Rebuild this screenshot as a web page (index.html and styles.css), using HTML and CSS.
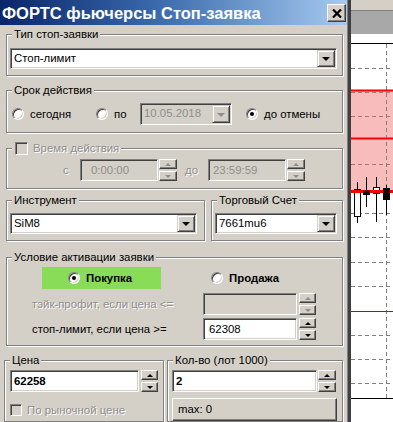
FILE: index.html
```html
<!DOCTYPE html>
<html>
<head>
<meta charset="utf-8">
<link rel="stylesheet" href="styles.css">
</head>
<body>
<div class="screen">
  <div class="dialog">
    <div class="titlebar">
      <span class="title">ФОРТС фьючерсы Стоп-заявка</span>
      <span class="close">
        <svg width="10" height="9" viewBox="0 0 10 9"><path d="M1 0.5 L9 8.5 M9 0.5 L1 8.5" stroke="#000" stroke-width="2.2" fill="none"/></svg>
      </span>
    </div>

    <fieldset class="group g-type">
      <legend>Тип стоп-заявки</legend>
      <div class="combo w-type"><span class="ctext">Стоп-лимит</span><span class="drop"><i class="tri"></i></span></div>
    </fieldset>

    <fieldset class="group g-term">
      <legend>Срок действия</legend>
      <div class="row term-row">
        <span class="radio r-today"><span class="rb"></span>сегодня</span>
        <span class="radio r-to"><span class="rb"></span>по</span>
        <div class="combo disabled w-date"><span class="ctext">10.05.2018</span><span class="drop"><i class="tri"></i></span></div>
        <span class="radio r-cancel"><span class="rb checked"></span>до отмены</span>
      </div>
    </fieldset>

    <fieldset class="group g-time">
      <legend class="legend-check"><span class="cb"></span><span class="dis">Время действия</span></legend>
      <div class="row time-row">
        <span class="dis lbl-s">с</span>
        <div class="field disabled w-time pad-hour">0:00:00</div>
        <div class="spin off"><span class="sb"><i class="up"></i></span><span class="sb"><i class="dn"></i></span></div>
        <span class="dis lbl-do">до</span>
        <div class="field disabled w-time">23:59:59</div>
        <div class="spin off"><span class="sb"><i class="up"></i></span><span class="sb"><i class="dn"></i></span></div>
      </div>
    </fieldset>

    <div class="pair pair-1">
      <fieldset class="group g-instr">
        <legend>Инструмент</legend>
        <div class="combo w-instr"><span class="ctext">SiM8</span><span class="drop"><i class="tri"></i></span></div>
      </fieldset>
      <fieldset class="group g-acc">
        <legend>Торговый Счет</legend>
        <div class="combo w-acc"><span class="ctext">7661mu6</span><span class="drop"><i class="tri"></i></span></div>
      </fieldset>
    </div>

    <fieldset class="group g-cond">
      <legend>Условие активации заявки</legend>
      <div class="row side-row">
        <div class="buy"><span class="radio bold"><span class="rb checked"></span>Покупка</span></div>
        <span class="radio bold r-sell"><span class="rb"></span>Продажа</span>
      </div>
      <div class="row cond-row r-tp">
        <span class="cond-lbl dis">тэйк-профит, если цена &lt;=</span>
        <div class="field disabled w-cond"></div>
        <div class="spin off narrow"><span class="sb"><i class="up"></i></span><span class="sb"><i class="dn"></i></span></div>
      </div>
      <div class="row cond-row r-sl">
        <span class="cond-lbl">стоп-лимит, если цена &gt;=</span>
        <div class="field w-cond">62308</div>
        <div class="spin narrow"><span class="sb"><i class="up"></i></span><span class="sb"><i class="dn"></i></span></div>
      </div>
    </fieldset>

    <div class="pair pair-2">
      <fieldset class="group g-price">
        <legend>Цена</legend>
        <div class="row price-row">
          <div class="field bold w-price">62258</div>
          <div class="spin narrow"><span class="sb"><i class="up"></i></span><span class="sb"><i class="dn"></i></span></div>
        </div>
        <div class="row market-row">
          <span class="cb"></span><span class="dis">По рыночной цене</span>
        </div>
      </fieldset>
      <fieldset class="group g-qty">
        <legend>Кол-во (лот 1000)</legend>
        <div class="row qty-row">
          <div class="field bold w-qty">2</div>
          <div class="spin"><span class="sb"><i class="up"></i></span><span class="sb"><i class="dn"></i></span></div>
        </div>
        <div class="btn max-btn">max: 0</div>
      </fieldset>
    </div>
  </div>

  <div class="chart">
    <svg width="42" height="422" viewBox="0 0 42 422">
      <rect x="0" y="0" width="42" height="10" fill="#d4d0c8"/>
      <rect x="0" y="10" width="42" height="24" fill="#a8a8a8"/>
      <line x1="0" y1="10.5" x2="42" y2="10.5" stroke="#808080"/>
      <rect x="0" y="34" width="42" height="388" fill="#ffffff"/>
      <rect x="0" y="90" width="42" height="102" fill="#f8bcbc"/>
      <g stroke="#808080" stroke-width="1" stroke-dasharray="4 3" fill="none">
        <line x1="0" y1="68.5" x2="42" y2="68.5"/>
        <line x1="0" y1="92.5" x2="42" y2="92.5" stroke="#a87878"/>
        <line x1="0" y1="116.5" x2="42" y2="116.5" stroke="#a87878"/>
        <line x1="0" y1="164.5" x2="42" y2="164.5" stroke="#a87878"/>
        <line x1="0" y1="213.5" x2="42" y2="213.5"/>
        <line x1="0" y1="237.5" x2="42" y2="237.5"/>
        <line x1="0" y1="262.5" x2="42" y2="262.5"/>
        <line x1="0" y1="286.5" x2="42" y2="286.5"/>
        <line x1="0" y1="335.5" x2="42" y2="335.5"/>
        <line x1="0" y1="359.5" x2="42" y2="359.5"/>
        <line x1="0" y1="383.5" x2="42" y2="383.5"/>
        <line x1="35.5" y1="44" x2="35.5" y2="398"/>
      </g>
      <line x1="0" y1="43.5" x2="42" y2="43.5" stroke="#000"/>
      <line x1="0" y1="398.5" x2="42" y2="398.5" stroke="#000"/>
      <line x1="0" y1="90.5" x2="42" y2="90.5" stroke="#ff0000" stroke-width="2"/>
      <line x1="0" y1="138.5" x2="42" y2="138.5" stroke="#ff0000" stroke-width="2"/>
      <line x1="0" y1="311.5" x2="42" y2="311.5" stroke="#d40000" stroke-width="1"/>
      <g stroke="#000" stroke-width="1">
        <line x1="6.5" y1="182" x2="6.5" y2="223"/>
        <rect x="3.5" y="189.5" width="6" height="27" fill="#fff"/>
        <line x1="15.5" y1="177" x2="15.5" y2="207"/>
        <rect x="12.5" y="190.5" width="6" height="4" fill="#000"/>
        <line x1="25.5" y1="177" x2="25.5" y2="222"/>
        <rect x="22.5" y="187.5" width="6" height="6" fill="#fff"/>
        <line x1="35.5" y1="185" x2="35.5" y2="215"/>
        <rect x="32.5" y="188.5" width="6" height="11" fill="#000"/>
      </g>
      <line x1="0" y1="191.5" x2="42" y2="191.5" stroke="#ff0000" stroke-width="3"/>
      <rect x="12.5" y="190.5" width="6" height="3" fill="#000"/>
      <rect x="32.5" y="189.5" width="6" height="10" fill="#000"/>
    </svg>
  </div>
</div>
</body>
</html>
```
FILE: styles.css
```css
* { box-sizing: border-box; }
html, body { margin: 0; padding: 0; }
body {
  width: 393px;
  height: 422px;
  overflow: hidden;
  background: #ffffff;
  font-family: "Liberation Sans", Arial, sans-serif;
  font-size: 11.4px;
  color: #000;
}
.screen { display: flex; width: 393px; height: 422px; }

.dialog {
  flex: none;
  width: 350px;
  height: 422px;
  background: #d4d0c8;
  border-right: 2px solid #404040;
  box-shadow: inset -1px 0 #808080;
  display: flex;
  flex-direction: column;
}
.chart {
  flex: none;
  width: 43px;
  height: 422px;
  border-left: 1px solid #404040;
}
.chart svg { display: block; }

/* title bar */
.titlebar {
  flex: none;
  height: 25px;
  margin-right: 1px;
  background: linear-gradient(to right, #0a246a 0%, #3a6aac 45%, #a6caf0 100%);
  display: flex;
  justify-content: space-between;
  align-items: flex-start;
  padding-left: 2px;
}
.title {
  color: #fff;
  font-weight: bold;
  font-size: 16.5px;
  line-height: 26px;
  white-space: nowrap;
}
.close {
  margin-top: 4px;
  margin-right: 1px;
  width: 19px;
  height: 18px;
  background: #d4d0c8;
  border: 1px solid;
  border-color: #fff #404040 #404040 #fff;
  box-shadow: inset -1px -1px #808080;
  display: flex;
  align-items: center;
  justify-content: center;
}
.close svg { display: block; }

/* group boxes */
.group {
  margin: 0;
  padding: 0;
  min-width: 0;
  border: 1px solid #808080;
  box-shadow: inset 1px 1px #fff, 1px 1px #fff;
  flex: none;
}
.group legend {
  margin-left: 5px;
  padding: 0 2px;
  height: 15px;
  line-height: 15px;
  background: #d4d0c8;
  white-space: nowrap;
}
.g-type { margin: 2px 0 0 6px; width: 337px; padding: 6px 0 6px 0; }
.g-term { margin: 7px 0 0 6px; width: 337px; padding: 5px 0 7px 0; }
.g-time { margin: 8px 0 0 6px; width: 337px; padding: 3px 0 7px 0; }
.pair { display: flex; flex: none; }
.pair-1 { margin: 4px 0 0 6px; gap: 6px; }
.g-instr { width: 199px; padding: 5px 0 6px 0; }
.g-acc { width: 132px; padding: 5px 0 6px 0; }
.g-cond { margin: 9px 0 0 6px; width: 337px; padding: 2px 0 5px 0; }
.pair-2 { margin: 7px 0 0 4px; gap: 3px; }
.g-price { width: 160px; padding: 2px 0 0 0; }
.g-qty { width: 176px; padding: 2px 0 0 0; }

.row { display: flex; align-items: center; }

/* combo boxes & fields */
.combo, .field {
  background: #fff;
  border: 1px solid;
  border-color: #808080 #fff #fff #808080;
  box-shadow: inset 1px 1px #404040, inset -1px -1px #d4d0c8;
  flex: none;
}
.combo { display: flex; height: 21px; padding: 1px; }
.combo .ctext { flex: 1; padding-left: 2px; line-height: 17px; white-space: nowrap; }
.combo.disabled, .field.disabled { background: #d4d0c8; color: #8e8e8e; }
.w-type { width: 327px; margin-left: 3px; }
.w-date { width: 92px; height: 22px; }
.w-instr { width: 187px; margin-left: 3px; }
.w-acc { width: 122px; margin-left: 3px; }

.drop {
  flex: none;
  width: 18px;
  background: #d4d0c8;
  border: 1px solid;
  border-color: #d4d0c8 #404040 #404040 #d4d0c8;
  box-shadow: inset 1px 1px #fff, inset -1px -1px #808080;
  display: flex;
  align-items: center;
  justify-content: center;
}
.tri {
  display: block;
  width: 0;
  height: 0;
  border-left: 4px solid transparent;
  border-right: 4px solid transparent;
  border-top: 4px solid #000;
  margin-top: 1px;
}
.disabled .tri { border-top-color: #8e8e8e; }

.field { height: 22px; padding-left: 4px; line-height: 20px; white-space: nowrap; }
.w-time { width: 78px; }
.pad-hour { padding-left: 10px; }
.w-cond { width: 94px; padding-left: 5px; }
.w-price { width: 129px; padding-left: 3px; }
.w-qty { width: 145px; padding-left: 3px; }
.bold { font-weight: bold; }

/* spin buttons */
.spin {
  flex: none;
  width: 18px;
  height: 22px;
  margin-left: 1px;
  display: flex;
  flex-direction: column;
  justify-content: space-between;
}
.spin.narrow { width: 17px; margin-left: 2px; }
.sb {
  height: 10px;
  background: #d4d0c8;
  border: 1px solid;
  border-color: #fff #404040 #404040 #fff;
  box-shadow: inset -1px -1px #808080;
  display: flex;
  align-items: center;
  justify-content: center;
}
.up, .dn {
  display: block;
  width: 0;
  height: 0;
  border-left: 3px solid transparent;
  border-right: 3px solid transparent;
}
.up { border-bottom: 3px solid #000; }
.dn { border-top: 3px solid #000; }
.off .up { border-bottom-color: #8e8e8e; }
.off .dn { border-top-color: #8e8e8e; }

/* radios & checkboxes */
.radio { display: flex; align-items: center; white-space: nowrap; flex: none; }
.rb {
  flex: none;
  width: 12px;
  height: 12px;
  margin-right: 6px;
  border-radius: 50%;
  background: #fff;
  border: 1px solid;
  border-color: #808080 #fff #fff #808080;
  box-shadow: inset 1px 1px #404040, inset -1px -1px #d4d0c8;
  display: flex;
  align-items: center;
  justify-content: center;
}
.rb.checked::after {
  content: "";
  width: 4px;
  height: 4px;
  border-radius: 50%;
  background: #000;
}
.term-row { height: 22px; margin-left: 5px; }
.r-today { width: 84px; }
.r-to { width: 44px; }
.r-cancel { margin-left: 14px; }

.cb {
  flex: none;
  width: 13px;
  height: 13px;
  background: #d4d0c8;
  border: 1px solid;
  border-color: #808080 #fff #fff #808080;
  box-shadow: inset 1px 1px #404040, inset -1px -1px #d4d0c8;
}
.legend-check { display: flex; align-items: center; }
.legend-check .cb { margin-left: 1px; margin-right: 5px; }
.dis { color: #8e8e8e; text-shadow: 1px 1px #fff; }

.time-row { height: 22px; margin-left: 56px; }
.lbl-s { width: 17px; }
.lbl-do { width: 23px; margin-left: 8px; }

/* activation condition */
.side-row { height: 22px; margin-left: 35px; }
.buy {
  width: 119px;
  height: 22px;
  background: #88dc58;
  padding-left: 26px;
  display: flex;
  align-items: center;
}
.r-sell { margin-left: 50px; }
.cond-row { margin-left: 25px; height: 22px; }
.r-tp { margin-top: 4px; }
.r-sl { margin-top: 3px; }
.cond-lbl { width: 171px; white-space: nowrap; }

/* price / qty */
.price-row { height: 22px; margin-left: 5px; }
.qty-row { height: 22px; margin-left: 4px; }
.market-row { margin-top: 11px; margin-left: 5px; height: 13px; }
.market-row .cb { width: 12px; height: 12px; margin-right: 5px; }
.btn {
  background: #d4d0c8;
  border: 1px solid;
  border-color: #fff #404040 #404040 #fff;
  box-shadow: inset -1px -1px #808080;
}
.max-btn { width: 165px; height: 23px; margin-top: 6px; margin-left: 4px; padding-left: 5px; line-height: 21px; }
```
